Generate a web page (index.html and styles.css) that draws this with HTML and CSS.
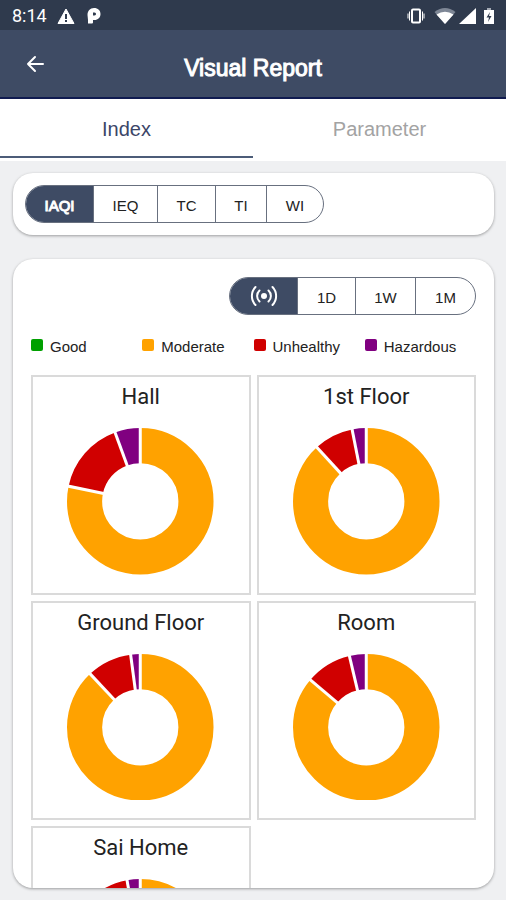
FILE: index.html
```html
<!DOCTYPE html>
<html lang="en">
<head>
<meta charset="utf-8">
<meta name="viewport" content="width=device-width, initial-scale=1">
<title>Visual Report</title>
<link rel="stylesheet" href="styles.css">
</head>
<body>
<div class="status">
  <span class="time">8:14</span>
  <svg class="s-warn" width="18" height="16" viewBox="0 0 18 16"><path d="M9 1 17 15.500H1Z" fill="#fff" stroke="#fff" stroke-linejoin="round"/><path d="M8 6h2v5H8zM8 12h2v2H8z" fill="#2f3a4d"/></svg>
  <svg class="s-p" width="14" height="16" viewBox="0 0 14 16"><path fill="#fff" fill-rule="evenodd" d="M7 0C11 0 13.500 2.500 13.500 6C13.500 9.500 11 12 7.500 12H6V14.500Q6 15.500 5 15.500H1V12L.5 7C.5 3 3 0 7 0ZM6 4.500V7.500H7.500C9.500 7.500 9.500 4.500 7.500 4.500Z"/></svg>
  <span class="grow"></span>
  <svg class="s-vib" width="18" height="16" viewBox="0 0 18 16" fill="none" stroke="#fff"><rect x="5" y="1.500" width="8" height="13" rx="1" stroke-width="2"/><path d="M2.500 3.500v9M15.500 3.500v9M1 5.500v5M17 5.500v5"/></svg>
  <svg class="s-wifi" width="22" height="16" viewBox="0 0 22 16"><path d="M11 16 .5 4Q11-4 21.500 4Z" fill="#7e8796"/><path d="M11 16 2.500 6.500Q11 1 19.500 6.500Z" fill="#fff"/></svg>
  <svg class="s-sig" width="17" height="16" viewBox="0 0 17 16"><path d="M17 0V16H0Z" fill="#fff"/></svg>
  <svg class="s-bat" width="10" height="16" viewBox="0 0 10 16"><path d="M3 0h4v3H3z" fill="#a5abb5"/><path d="M0 2h10v14H0z" fill="#fff"/><path d="M6 4 2.500 9.500H5L4 14l3.500-6H5z" fill="#2f3a4d"/></svg>
</div>
<header class="bar">
  <button class="back" aria-label="Back"><svg width="18" height="18" viewBox="0 0 18 18" fill="none" stroke="#fff" stroke-width="2" stroke-linecap="round" stroke-linejoin="round"><path d="M17 9H2M9 2 2 9 9 16"/></svg></button>
  <h1>Visual Report</h1>
</header>
<nav class="tabs"><a href="#index" class="tab on">Index</a><a href="#parameter" class="tab">Parameter</a></nav>
<main>
  <section class="card filter">
    <div class="seg">
      <button class="on w67">IAQI</button><button class="w64">IEQ</button><button class="w58">TC</button><button class="w51">TI</button><button class="w57">WI</button>
    </div>
  </section>
  <section class="card report">
    <div class="seg range">
      <button class="on w67" aria-label="Live"><svg width="28" height="22" viewBox="0 0 28 22" fill="none" stroke="#fff" stroke-width="2" stroke-linecap="round"><circle cx="14" cy="11" r="3" fill="#fff" stroke="none"/><path d="M9.500 5.500a7.500 7.500 0 0 0 0 11M18.500 5.500a7.500 7.500 0 0 1 0 11M5.500 2a13 13 0 0 0 0 18M22.500 2a13 13 0 0 1 0 18"/></svg></button><button class="w58">1D</button><button class="w60">1W</button><button class="w60">1M</button>
    </div>
    <ul class="legend">
      <li><i class="good"></i>Good</li><li><i class="moderate"></i>Moderate</li><li><i class="unhealthy"></i>Unhealthy</li><li><i class="hazardous"></i>Hazardous</li>
    </ul>
    <div class="grid" id="grid"></div>
  </section>
</main>
<script src="charts.js"></script>
</body>
</html>
```
FILE: styles.css
```css
* { box-sizing: border-box; }
body {
  margin: 0;
  height: 100vh;
  display: flex;
  flex-direction: column;
  overflow: hidden;
  background: #eff0f2;
  font-family: "Liberation Sans", Arial, sans-serif;
  color: #222;
}
button { font: inherit; border: 0; padding: 0; background: none; }
svg { display: block; flex: none; }
.status {
  flex: none;
  display: flex;
  align-items: center;
  height: 30px;
  padding: 2px 12px 0;
  background: #2f3a4d;
  color: #fff;
}
.time { font: 18px/28px Roboto, sans-serif; margin-right: 10px; }
.s-warn { margin-right: 12px; }
.grow { flex: 1; }
.s-vib { margin-right: 9px; }
.s-wifi { margin-right: 3px; }
.s-sig { margin-right: 8px; }
.bar {
  flex: none;
  display: grid;
  grid-template-columns: 46px 1fr 46px;
  align-items: center;
  height: 69px;
  padding: 0 12px;
  background: #3e4b64;
  border-bottom: 2px solid #101b50;
  color: #fff;
}
.back { height: 44px; display: grid; place-items: center; }
h1 { margin: 8px 0 0; text-align: center; font-size: 23px; line-height: 28px; font-weight: 400; -webkit-text-stroke: 1px #fff; }
.tabs { flex: none; display: flex; height: 62px; background: #fff; }
.tab {
  flex: 1;
  height: 59px;
  text-align: center;
  font-size: 20px;
  line-height: 60px;
  color: #a3a3a3;
  text-decoration: none;
}
.tab.on { color: #3c4668; border-bottom: 2px solid #4c5c78; }
main {
  flex: 1;
  min-height: 0;
  display: flex;
  flex-direction: column;
  gap: 24px;
  padding: 12px 12px 12px 13px;
}
.card { background: #fff; border-radius: 20px; box-shadow: 0 1px 3px rgba(0, 0, 0, .35); }
.filter { flex: none; padding: 12px; }
.report { flex: 1; min-height: 0; overflow: hidden; padding: 18px; }
.seg {
  display: flex;
  width: max-content;
  height: 38px;
  border: 1px solid #68707f;
  border-radius: 19px;
  overflow: hidden;
  font-size: 15px;
}
.seg button { display: grid; place-items: center; padding-top: 3px; color: #222; border-left: 1px solid #68707f; }
.seg button.on { background: #3e4b64; color: #fff; border-left: 0; -webkit-text-stroke: 1px #fff; }
.range { margin-left: auto; }
.range button.on { padding-top: 0; }
.w51 { width: 51px; }
.w57 { width: 57px; }
.w58 { width: 58px; }
.w60 { width: 60px; }
.w64 { width: 64px; }
.w67 { width: 67px; }
.legend {
  display: grid;
  grid-template-columns: repeat(4, 1fr);
  margin: 22px 0 18px;
  padding: 0;
  list-style: none;
  font-size: 15px;
  line-height: 20px;
}
.legend li { display: flex; gap: 7px; white-space: nowrap; }
.legend i { width: 12px; height: 12px; margin-top: 2px; border-radius: 2px; }
.good { background: #00a000; }
.moderate { background: #ffa200; }
.unhealthy { background: #d00000; }
.hazardous { background: #800080; }
.grid { display: grid; grid-template-columns: 1fr 1fr; gap: 6px; }
.tile { border: 2px solid #dadada; padding: 4px 0 18px; }
.tile h2 { margin: 0 0 15px; text-align: center; font: 22px/32px Roboto, sans-serif; color: #222; }
.tile svg { width: 68%; margin: 0 auto; }
```
FILE: charts.js
```js
// Each place lists where its unhealthy and hazardous slices begin, in percent of the ring.
const places = [
  ["Hall", 78.3, 94.4],
  ["1st Floor", 88.2, 96.9],
  ["Ground Floor", 88, 97.9],
  ["Room", 86.2, 96.3],
  ["Sai Home", 88, 97.1]
];

function slice(from, to, color) {
  return `<circle r="55.500" pathLength="100" fill="none" stroke="${color}" stroke-width="35" stroke-dasharray="${to - from} 100" stroke-dashoffset="${-from}" transform="rotate(-90)"/>`;
}

function divider(at) {
  return `<path d="M0-36V-75" stroke="#fff" stroke-width="3" transform="rotate(${at * 3.6})"/>`;
}

document.getElementById("grid").innerHTML = places.map(([name, red, purple]) =>
  `<article class="tile"><h2>${name}</h2><svg viewBox="-73 -73 146 146" role="img" aria-label="${name}">` +
  slice(0, red, "#ffa200") + slice(red, purple, "#d00000") + slice(purple, 100, "#800080") +
  divider(0) + divider(red) + divider(purple) + `</svg></article>`
).join("");
```
